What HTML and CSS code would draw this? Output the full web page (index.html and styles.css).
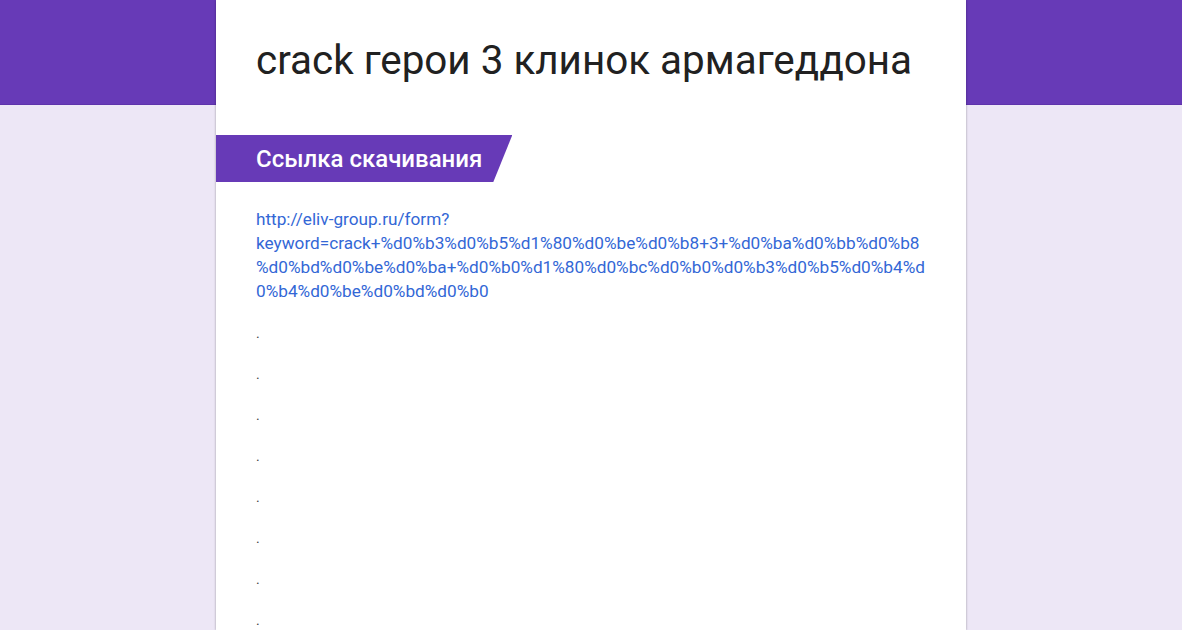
FILE: index.html
```html
<!DOCTYPE html>
<html lang="ru">
<head>
    <meta charset="UTF-8">
    <meta name="viewport" content="width=device-width, initial-scale=1.0">
    <title>crack герои 3 клинок армагеддона</title>
    <link rel="stylesheet" href="styles.css">
</head>
<body>

    <div class="viewport">
        <div class="page">
            <div class="card">
                <h1 class="form-title">crack герои 3 клинок армагеддона</h1>

                <!-- Section header -->
                <div class="section-head">Ссылка скачивания</div>

                <div class="section-body">
                    <a class="link" href="#">http://eliv-group.ru/form?keyword=crack+%d0%b3%d0%b5%d1%80%d0%be%d0%b8+3+%d0%ba%d0%bb%d0%b8%d0%bd%d0%be%d0%ba+%d0%b0%d1%80%d0%bc%d0%b0%d0%b3%d0%b5%d0%b4%d0%b4%d0%be%d0%bd%d0%b0</a>

                    <div class="dots">
                        <p>.</p>
                        <p>.</p>
                        <p>.</p>
                        <p>.</p>
                        <p>.</p>
                        <p>.</p>
                        <p>.</p>
                        <p>.</p>
                    </div>
                </div>
            </div>
        </div>
        <div class="gutter"></div>
    </div>

</body>
</html>
```

FILE: styles.css
```css
html, body {
    margin: 0;
    padding: 0;
    height: 100%;
    overflow: hidden;
    background: #fff;
}

body {
    font-family: 'Roboto', 'Liberation Sans', sans-serif;
    color: #212121;
}

.viewport {
    display: flex;
    height: 630px;
}

.page {
    flex: 1;
    display: flex;
    justify-content: center;
    background: linear-gradient(#673ab7 0, #673ab7 104px, #5e33ab 104px, #5e33ab 105px, #ede7f6 105px);
}

.gutter {
    width: 18px;
    background: #fff;
}

.card {
    width: 750px;
    background: #fff;
    padding-top: 37px;
    box-shadow: 0 0 2px rgba(0, 0, 0, 0.25), 0 1px 3px rgba(0, 0, 0, 0.12);
}

.form-title {
    margin: 0 0 50px;
    padding: 0 40px;
    font-size: 40.4px;
    font-weight: 400;
    line-height: 48px;
    color: #212121;
}

.section-head {
    display: inline-block;
    height: 47px;
    padding: 2px 30px 0 40px;
    box-sizing: border-box;
    background: #673ab7;
    color: #fff;
    font-size: 24px;
    font-weight: 500;
    line-height: 45px;
    clip-path: polygon(0 0, 100% 0, calc(100% - 19px) 100%, 0 100%);
}

.section-body {
    padding: 25px 40px 0;
}

.link {
    display: block;
    color: #3367d6;
    text-decoration: none;
    font-size: 17.2px;
    line-height: 24px;
    overflow-wrap: break-word;
}

.dots {
    margin-top: 10px;
}

.dots p {
    margin: 0;
    font-size: 14px;
    line-height: 41px;
    color: #444;
}
```
